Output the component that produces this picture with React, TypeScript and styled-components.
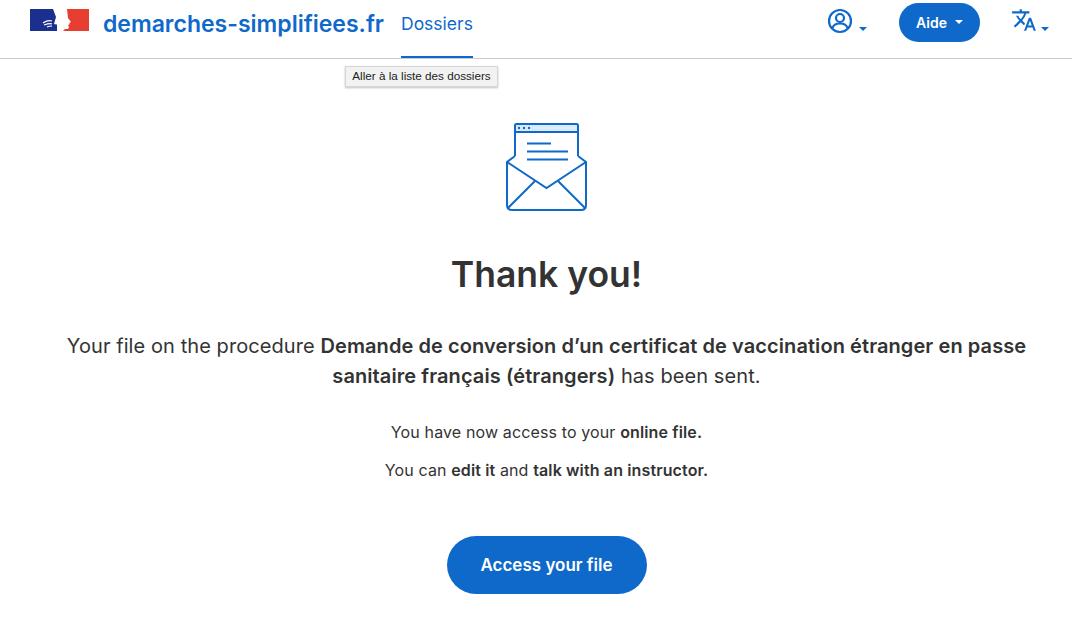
import styled, { createGlobalStyle } from "styled-components";

const GlobalStyle = createGlobalStyle`
  html, body {
    margin: 0;
    padding: 0;
    background: #fff;
    overflow: hidden;
  }
  body {
    font-family: "Inter", "Noto Sans", sans-serif;
    font-variant-ligatures: none;
    color: #333;
  }
`;

const BLUE = "#0f69ca";

const Caret = () => (
  <CaretIcon width="8" height="4" viewBox="0 0 8 4">
    <path d="M0 0h8L4 4z" fill="currentColor" />
  </CaretIcon>
);

const App = () => {
  return (
    <Page>
      <GlobalStyle />
      <Header>
        <Logo width="59" height="22" viewBox="0 0 59 22">
          <rect x="0" y="0" width="27" height="22" fill="#1b2f8f" />
          <path d="M23 0h8c3 0 5 3 5 6l-2 7-5 3-5-1 2-7z" fill="#fff" />
          <path d="M37 0h22v22H33l2-2h3l1-2-1-2 2-1-1-1 2-1-3-4z" fill="#e63f32" />
          <path
            d="M13 14c3-2 6-3 9-2M14 16c3-1 6-2 8-1M17 18c2-1 4-1 5-1"
            fill="none"
            stroke="#fff"
            strokeWidth="1.200"
          />
        </Logo>
        <Brand>demarches-simplifiees.fr</Brand>
        <NavLink>Dossiers</NavLink>
        <Spacer />
        <UserButton>
          <svg width="26" height="26" viewBox="0 0 26 26" fill="none" stroke={BLUE} strokeWidth="2.200">
            <circle cx="13" cy="13" r="11" />
            <circle cx="13" cy="10" r="4" />
            <path d="M5.500 20c1-3.500 4-4.500 7.500-4.500s6.500 1 7.500 4.500" />
          </svg>
          <Caret />
        </UserButton>
        <HelpButton>
          Aide
          <Caret />
        </HelpButton>
        <LangButton>
          <svg width="26" height="26" viewBox="0 0 24 24" fill={BLUE}>
            <path d="m12.870 15.070-2.540-2.510.030-.030A17.520 17.520 0 0 0 14.070 6H17V4h-7V2H8v2H1v1.990h11.170C11.500 7.920 10.440 9.750 9 11.350 8.070 10.320 7.300 9.190 6.690 8h-2c.73 1.630 1.730 3.170 2.980 4.560l-5.090 5.020L4 19l5-5 3.110 3.110zM18.500 10h-2L12 22h2l1.120-3h4.750L21 22h2zm-2.620 7 1.620-4.330L19.120 17z" />
          </svg>
          <Caret />
        </LangButton>
      </Header>

      <Tooltip>Aller à la liste des dossiers</Tooltip>

      <Main>
        <svg width="81" height="90" viewBox="0 0 81 90" fill="none" stroke={BLUE} strokeWidth="2">
          <rect x="9" y="1" width="63" height="8" rx="1.500" fill="#dcebfb" />
          <path d="M9 33V9h63v24" />
          <circle cx="13" cy="5" r="1.200" fill={BLUE} stroke="none" />
          <circle cx="18" cy="5" r="1.200" fill={BLUE} stroke="none" />
          <circle cx="23" cy="5" r="1.200" fill={BLUE} stroke="none" />
          <path d="M21 20.500h24M21 28.500h41M21 36.500h41" />
          <path d="M9 33 1 39v43q0 5 5 5h69q5 0 5-5V39l-8-6" />
          <path d="M1 39l39.500 26L80 39" />
          <path d="M2 85l27-27M79 85 52 58" />
        </svg>
        <Title>Thank you!</Title>
        <Lead>
          Your file on the procedure{" "}
          <strong>
            Demande de conversion d’un certificat de vaccination étranger en passe sanitaire français (étrangers)
          </strong>{" "}
          has been sent.
        </Lead>
        <Note>
          You have now access to your <strong>online file.</strong>
        </Note>
        <Note>
          You can <strong>edit it</strong> and <strong>talk with an instructor.</strong>
        </Note>
        <AccessButton>Access your file</AccessButton>
      </Main>
    </Page>
  );
};

export default App;

const Page = styled.div`
  position: relative;
  width: 1072px;
  height: 623px;
  overflow: hidden;
`;

const Header = styled.header`
  display: flex;
  align-items: center;
  height: 58px;
  box-sizing: content-box;
  padding: 0 23px 0 30px;
  border-bottom: 1px solid #ccc;
`;

const Logo = styled.svg`
  flex: none;
  margin: 0 14px 18px 0;
`;

const Brand = styled.div`
  font-size: 23px;
  font-weight: 600;
  color: ${BLUE};
  margin-right: 17px;
  position: relative;
  top: -5px;
`;

const NavLink = styled.a`
  display: flex;
  align-items: flex-start;
  height: 58px;
  box-sizing: border-box;
  padding-top: 13px;
  font-size: 17.500px;
  color: ${BLUE};
  border-bottom: 2px solid ${BLUE};
`;

const Spacer = styled.div`
  flex: 1;
`;

const CaretIcon = styled.svg`
  display: block;
  flex: none;
`;

const UserButton = styled.div`
  display: flex;
  align-items: flex-end;
  gap: 6px;
  color: ${BLUE};
  margin: 0 32px 16px 0;
  svg:last-child {
    margin-bottom: 3px;
  }
`;

const HelpButton = styled.div`
  display: flex;
  align-items: center;
  gap: 8px;
  justify-content: center;
  width: 81px;
  height: 39px;
  border-radius: 20px;
  background: ${BLUE};
  color: #fff;
  font-size: 14px;
  font-weight: 600;
  margin: 0 31px 14px 0;
`;

const LangButton = styled.div`
  display: flex;
  align-items: flex-end;
  gap: 4px;
  color: ${BLUE};
  margin-bottom: 18px;
  svg:last-child {
    margin-bottom: 2px;
  }
`;

const Tooltip = styled.div`
  position: absolute;
  left: 345px;
  top: 66px;
  box-sizing: border-box;
  width: 153px;
  height: 21px;
  line-height: 18px;
  text-align: center;
  font-family: "Liberation Sans", sans-serif;
  font-size: 11.700px;
  color: #222;
  background: #f2f2f2;
  border: 1px solid #d6d6d6;
  box-shadow: 0 1px 2px rgba(0, 0, 0, 0.25);
`;

const Main = styled.main`
  width: 1093px;
  box-sizing: border-box;
  padding: 64px 60px 0;
  display: flex;
  flex-direction: column;
  align-items: center;
  text-align: center;
`;

const Title = styled.h1`
  margin: 39px 0 0;
  font-size: 35.500px;
  line-height: 46px;
  font-weight: 600;
  color: #333;
`;

const Lead = styled.p`
  margin: 33px 0 0;
  font-size: 20px;
  line-height: 30px;
  letter-spacing: 0.08px;
  color: #333;
  strong {
    font-weight: 600;
  }
`;

const Note = styled.p`
  margin: 20px 0 0;
  font-size: 16px;
  line-height: 18px;
  letter-spacing: 0.13px;
  color: #333;
  strong {
    font-weight: 600;
  }
  ${Lead} + & {
    margin-top: 32px;
  }
`;

const AccessButton = styled.a`
  display: flex;
  align-items: center;
  justify-content: center;
  width: 200px;
  height: 58px;
  margin-top: 57px;
  border-radius: 29px;
  background: ${BLUE};
  color: #fff;
  font-size: 17px;
  font-weight: 600;
`;
